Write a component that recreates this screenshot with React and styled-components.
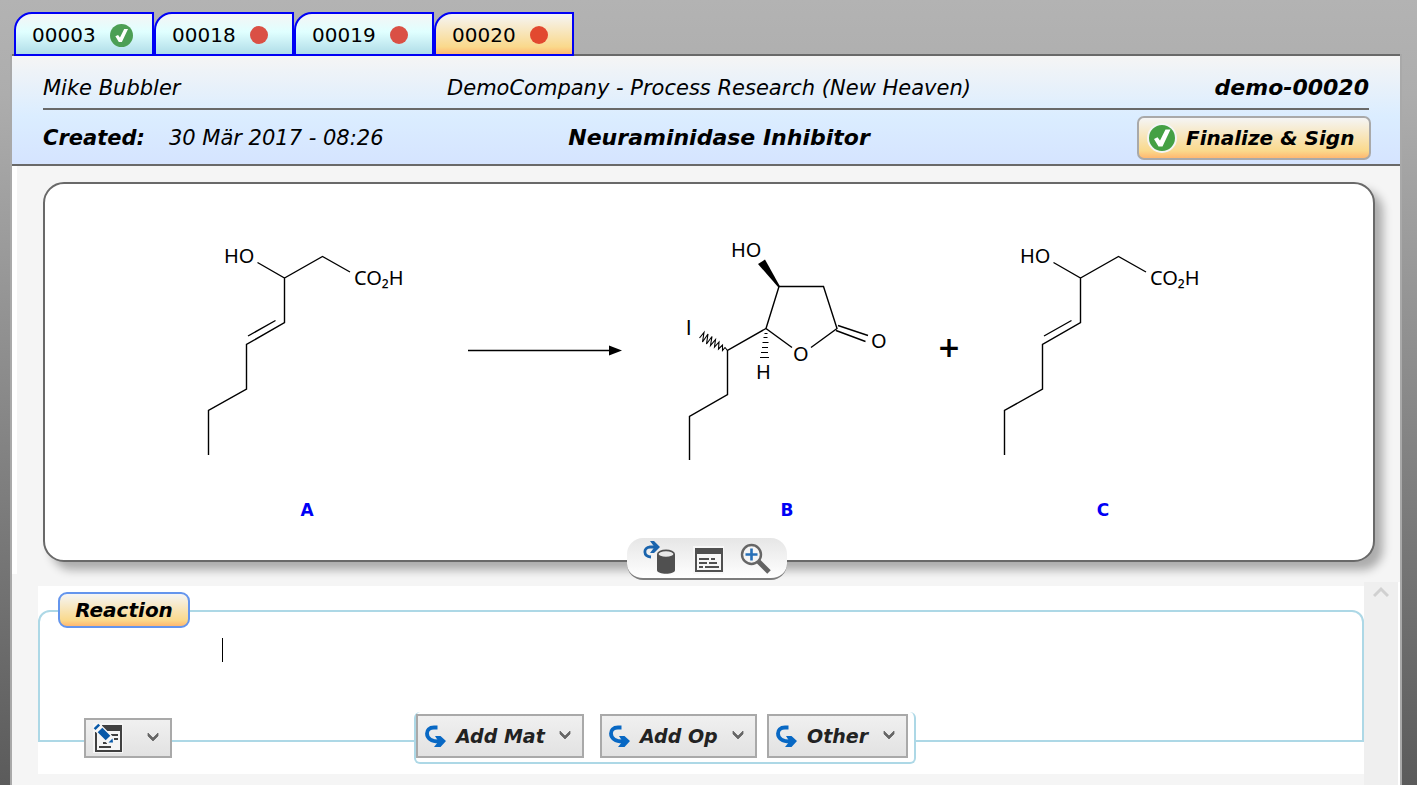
import React from "react";
import styled, { createGlobalStyle } from "styled-components";

const Global = createGlobalStyle`
  * { box-sizing: border-box; }
  html, body { margin: 0; padding: 0; }
  body {
    font-family: "DejaVu Sans", Verdana, sans-serif;
    font-size: 20px;
    line-height: 24px;
    color: #000;
    background: #5b5b5b;
  }
  h1, h2, p { margin: 0; font-size: inherit; }
  button { font: inherit; color: inherit; cursor: pointer; }
`;

const warm = "linear-gradient(#f5f5f5, #fad98c 82%, #ffb870)";

const Page = styled.div`
  min-height: 100vh;
  display: flex;
  flex-direction: column;
  padding: 12px 15px 0 10px;
  background: linear-gradient(#b3b3b3, #adadad 12%, #5b5b5b);
`;

const Tabs = styled.nav`
  display: flex;
  padding-left: 4px;
  margin-bottom: -2px;
  position: relative;
  z-index: 1;
`;

const Tab = styled.button`
  width: 140px;
  height: 44px;
  display: flex;
  align-items: center;
  gap: 14px;
  padding: 2px 0 0 16px;
  border: 2px solid #0000f5;
  border-radius: 18px 0 0 0;
  background: ${(p) => (p.$active ? warm : "linear-gradient(#f5f5f5, #e0ffff 45%, #b0dde8)")};
`;

const Frame = styled.div`
  flex: 1;
  display: flex;
  flex-direction: column;
  border: solid #a9a9a9;
  border-width: 0 2px;
  background: #f5f5f5;
`;

const Header = styled.header`
  height: 112px;
  padding: 0 31px;
  border: solid #696969;
  border-width: 2px 0;
  background: linear-gradient(#f5f5f5, #dbedff 55%, #d5e4ff);
`;

const HeaderRow = styled.div`
  display: flex;
  justify-content: space-between;
  align-items: center;
  height: 54px;
  padding-top: ${(p) => (p.$ruled ? "12px" : "2px")};
  border-bottom: ${(p) => (p.$ruled ? "2px solid #696969" : "0")};
`;

const HeaderText = styled.div`
  flex: ${(p) => (p.$middle ? "none" : "1")};
  display: flex;
  gap: 24px;
  padding-left: ${(p) => (p.$middle ? 6 : 0)}px;
  justify-content: ${(p) => (p.$end ? "flex-end" : "flex-start")};
  font-size: ${(p) => (p.$end ? 22 : 21)}px;
  font-style: italic;
  white-space: nowrap;
`;

const Title = styled.h1`
  && { font-size: 22px; }
  padding-left: 24px;
  font-weight: bold;
  font-style: italic;
  white-space: nowrap;
`;

const ButtonSlot = styled.div`
  flex: 1;
  display: flex;
  justify-content: flex-end;
  margin-right: -2px;
`;

const SignButton = styled.button`
  width: 234px;
  height: 44px;
  display: flex;
  align-items: center;
  gap: 9px;
  padding: 0 8px;
  border: 2px solid #a9a9a9;
  border-radius: 7px;
  background: ${warm};
  font-weight: bold;
  font-style: italic;
  white-space: nowrap;
`;

const Body = styled.main`
  flex: 1;
  display: flex;
  flex-direction: column;
`;

const CardArea = styled.div`
  height: 408px;
  padding: 16px 25px 0 26px;
  border-left: 5px solid #fff;
`;

const Card = styled.section`
  position: relative;
  height: 380px;
  padding: 46px 8px 0 0;
  border: 2px solid #696969;
  border-radius: 21px;
  background: #fff;
  box-shadow: 8px 8px 10px rgba(0, 0, 0, 0.3);
`;

const Scheme = styled.div`
  display: flex;
  justify-content: center;
`;

const Species = styled.figure`
  margin: 0;
  width: 224px;
`;

const Caption = styled.figcaption`
  margin-top: 23px;
  text-align: center;
  font-size: 17px;
  font-weight: bold;
  color: #0000f5;
`;

const Plus = styled.div`
  width: 92px;
  padding: 106px 0 0 8px;
  text-align: center;
  font-size: 28px;
  font-weight: bold;
`;

const Drawing = styled.svg`
  display: block;
  flex: none;
  overflow: visible;
  fill: none;
  stroke: #000;
  stroke-width: 1.4;
  text {
    font-family: "Noto Sans", sans-serif;
    font-size: 20px;
    fill: #000;
    stroke: none;
  }
  text.iodine { font-family: Roboto, sans-serif; }
`;

const CardTools = styled.div`
  position: absolute;
  left: 50%;
  bottom: -20px;
  width: 160px;
  height: 42px;
  margin-left: -82px;
  padding-left: 2px;
  display: flex;
  justify-content: center;
  align-items: center;
  gap: 15px;
  border-bottom: 2px solid #7d7d7d;
  border-radius: 16px;
  background: linear-gradient(#e6e6e6, #fff);
`;

const IconButton = styled.button`
  display: flex;
  padding: 0;
  border: 0;
  background: none;
`;

const Lower = styled.div`
  flex: 1;
  display: flex;
  margin: 8px 0 0 26px;
`;

const Sheet = styled.div`
  flex: 1;
  align-self: flex-start;
  margin-top: 4px;
  padding: 6px 0 32px;
  background: #fff;
`;

const Step = styled.fieldset`
  margin: 0;
  padding: 0;
  min-width: 0;
  border: 2px solid #add8e6;
  border-radius: 12px 12px 0 0;
`;

const StepName = styled.legend`
  margin-left: 18px;
  padding: 0 0 2px;
`;

const StepButton = styled.button`
  display: block;
  width: 132px;
  height: 36px;
  padding: 0;
  border: 2px solid #6495ed;
  border-radius: 9px;
  background: ${warm};
  font-weight: bold;
  font-style: italic;
`;

const Entry = styled.div`
  display: flex;
  height: 82px;
  padding: 8px 16px 0 182px;
`;

const Caret = styled.span`
  width: 1px;
  height: 24px;
  background: #000;
`;

const Note = styled.textarea`
  flex: 1;
  height: 60px;
  padding: 0;
  border: 0;
  outline: 0;
  resize: none;
  background: transparent;
  font: inherit;
`;

const Actions = styled.div`
  display: flex;
  align-items: center;
  height: 52px;
  margin: 0 0 -24px 44px;
`;

const Tray = styled.div`
  display: flex;
  height: 52px;
  width: 502px;
  margin-left: 242px;
  padding: 2px 0 0;
  border: solid #add8e6;
  border-width: 0 2px 2px;
  border-radius: 6px;
  background: #fff;
`;

const MenuButton = styled.button`
  display: flex;
  align-items: center;
  justify-content: space-between;
  width: ${(p) => p.$width}px;
  height: ${(p) => (p.$small ? 40 : 44)}px;
  margin-right: ${(p) => p.$after || 0}px;
  padding: ${(p) => (p.$small ? "0 11px 0 7px" : "0 11px 0 7px")};
  border: 2px solid #a9a9a9;
  background: linear-gradient(#f0f0f0, #e2e2e2);
  color: #222;
  font-size: 19px;
  font-weight: bold;
  font-style: italic;
  white-space: nowrap;
`;

const MenuLabel = styled.span`
  flex: 1;
  padding-left: 9px;
  text-align: left;
`;

const ScrollTrack = styled.div`
  width: 36px;
  display: flex;
  justify-content: center;
  align-items: flex-start;
  padding-top: 4px;
  border-right: 2px solid #fff;
  background: #efefef;
`;

const Check = ({ size, color = "#45a044", ring }) => (
  <svg width={size} height={size} viewBox="0 0 30 30" aria-hidden="true">
    <circle cx="15" cy="15" r={ring ? 14 : 15} fill={color} stroke={ring ? "#f5f5f5" : "none"} strokeWidth="2" />
    <path d="M7 16L10.500 14.300L13 17.500L18.500 6.500H23.500L15.500 23.500H11.500z" fill="#fff" />
  </svg>
);

const Dot = ({ color }) => (
  <svg width="18" height="18" aria-hidden="true"><circle cx="9" cy="9" r="9" fill={color} /></svg>
);

const Chevron = () => (
  <svg width="12" height="12" viewBox="0 0 12 12" aria-hidden="true">
    <path d="M1 1V4L6 9L11 4V1L6 6z" fill="#666" stroke="#666" strokeWidth="0.800" />
  </svg>
);

const Hook = () => (
  <svg width="22" height="24" viewBox="0 0 22 24" aria-hidden="true">
    <path d="M12.500 3.500H9C4 3.500 2 6.500 2 9.500C2 14 6 17.500 14 17.500" fill="none" stroke="#0868c4" strokeWidth="3.800" />
    <path d="M10 12H15.500L21 17L15.500 23H9L13.500 17.500z" fill="#0868c4" />
  </svg>
);

const NoteIcon = () => (
  <svg width="30" height="30" viewBox="0 0 30 30" aria-hidden="true">
    <path d="M0 0H30V30H0z" fill="#f5f5f5" />
    <path d="M3 9V28H28V3" fill="none" stroke="#404040" strokeWidth="2" />
    <path d="M9 2H29V8H9z" fill="#404040" />
    <path d="M18 12h7M21 16h4M10 20h4M6 24h12" stroke="#404040" strokeWidth="2" />
    <path d="M0 0L18 18" stroke="#f5f5f5" strokeWidth="9" />
    <path d="M3 3L4.800 4.800M7 7L15 15" stroke="#0758a8" strokeWidth="6.500" />
    <path d="M15.500 19.500L19.500 15.500L20 19.500z" fill="#0758a8" />
  </svg>
);

const StoreIcon = () => (
  <svg width="34" height="36" viewBox="0 0 34 36" aria-hidden="true">
    <path d="M8 17C0 16.500 0 7.500 7 7H14" fill="none" stroke="#1a64ad" strokeWidth="2.800" />
    <path d="M7 1h4l6 6-6 6H7l4.500-6z" fill="#1a64ad" />
    <path d="M14 14v16c0 5 18 5 18 0V14z" fill="#505050" />
    <ellipse cx="23" cy="14" rx="8.200" ry="3.600" fill="#e8e8e8" stroke="#505050" strokeWidth="1.600" />
  </svg>
);

const FormIcon = () => (
  <svg width="32" height="32" viewBox="0 0 32 32" aria-hidden="true">
    <path d="M1 4h31v28H1z" fill="#f7f7f7" />
    <path d="M4 7h26v22H4z" fill="none" stroke="#505050" strokeWidth="2" />
    <path d="M3 6h28v6H3z" fill="#505050" />
    <path d="M7 17h10M19 17h4M7 21h8M17 21h8M7 25h4M13 25h14" stroke="#505050" strokeWidth="2" />
  </svg>
);

const ZoomIcon = () => (
  <svg width="34" height="36" viewBox="0 0 34 36" aria-hidden="true">
    <path d="M19 21l11 11" stroke="#636363" strokeWidth="5" />
    <circle cx="12.500" cy="14.500" r="9.500" fill="#f5f5f5" stroke="#666" strokeWidth="2.400" />
    <path d="M12.500 8.500v12M6.500 14.500h12" stroke="#2770b8" strokeWidth="2.600" />
  </svg>
);

const HydroxyAcid = () => (
  <Drawing width="224" height="245" viewBox="195 230 224 245" role="img" aria-label="Hydroxy acid">
    <text x="224" y="263">HO</text>
    <path d="M257.500 262.500L284.500 278L322.500 256.500L350 272M284.500 278V322.500L246.500 344.500V389L208.500 410.500V455M248 336L275.500 320.500" />
    <text x="354" y="285">CO₂H</text>
  </Drawing>
);

const IodoLactone = () => (
  <Drawing width="224" height="245" viewBox="675 230 224 245" role="img" aria-label="Iodolactone">
    <text x="731" y="257">HO</text>
    <path d="M758 264L765 259.500L780 286.500L778.500 287.500z" fill="#000" stroke="none" />
    <path d="M792 347.500L766 328.500L779 286.500H823.500L837 328.500L811 347.500M838 325.500L868 335.500M836 330.500L865.500 341.500" />
    <path d="M766 328.500L727.500 350.500V394.500L689.500 416.500V460" />
    <path d="M764.500 333.500h3M763.500 337.500h4M762.500 342.500h6M762 347.500h6M761 352.500h7M760 357.500h9" strokeWidth="1.200" />
    <path d="M699.500 338L704 332.500L702.500 342L708 334L706.500 344L712 336.500L710.500 345.500L715.500 339.500L714.500 347L719 342L718.500 349L722.500 345L722.500 350.500L725 347.500L727.500 350.500" strokeWidth="1.100" />
    <text className="iodine" x="686" y="335">I</text>
    <text x="793" y="361">O</text>
    <text x="871" y="348">O</text>
    <text x="756" y="379">H</text>
  </Drawing>
);

const ReactionArrow = () => (
  <Drawing width="256" height="245" viewBox="419 230 256 245" role="img" aria-label="yields">
    <path d="M468 350.500H610" />
    <path d="M609 345.500L622 350.500L609 355.500z" fill="#000" stroke="none" />
  </Drawing>
);

const tabs = [
  { id: "00003", done: true },
  { id: "00018" },
  { id: "00019" },
  { id: "00020", active: true },
];

const menus = [
  { label: "Add Mat", width: 168, after: 16 },
  { label: "Add Op", width: 157, after: 10 },
  { label: "Other", width: 141 },
];

export default function App() {
  return (
    <Page>
      <Global />
      <Tabs>
        {tabs.map((t) => (
          <Tab key={t.id} $active={t.active}>
            {t.id}
            {t.done ? <Check size={23} color="#4c9f55" /> : <Dot color={t.active ? "#e2492f" : "#da5045"} />}
          </Tab>
        ))}
      </Tabs>
      <Frame>
        <Header>
          <HeaderRow $ruled>
            <HeaderText>Mike Bubbler</HeaderText>
            <HeaderText $middle>DemoCompany - Process Research (New Heaven)</HeaderText>
            <HeaderText $end><strong>demo-00020</strong></HeaderText>
          </HeaderRow>
          <HeaderRow>
            <HeaderText><strong>Created:</strong><span>30 Mär 2017 - 08:26</span></HeaderText>
            <Title>Neuraminidase Inhibitor</Title>
            <ButtonSlot>
              <SignButton><Check size={30} ring />Finalize &amp; Sign</SignButton>
            </ButtonSlot>
          </HeaderRow>
        </Header>
        <Body>
          <CardArea>
            <Card>
              <Scheme>
                <Species><HydroxyAcid /><Caption>A</Caption></Species>
                <ReactionArrow />
                <Species><IodoLactone /><Caption>B</Caption></Species>
                <Plus>+</Plus>
                <Species><HydroxyAcid /><Caption>C</Caption></Species>
              </Scheme>
              <CardTools>
                <IconButton aria-label="Store reaction"><StoreIcon /></IconButton>
                <IconButton aria-label="Show details"><FormIcon /></IconButton>
                <IconButton aria-label="Zoom in"><ZoomIcon /></IconButton>
              </CardTools>
            </Card>
          </CardArea>
          <Lower>
            <Sheet>
              <Step>
                <StepName><StepButton>Reaction</StepButton></StepName>
                <Entry><Caret /><Note aria-label="Reaction notes" /></Entry>
                <Actions>
                  <MenuButton $small $width={88} aria-label="Edit note"><NoteIcon /><Chevron /></MenuButton>
                  <Tray>
                    {menus.map((m) => (
                      <MenuButton key={m.label} $width={m.width} $after={m.after}>
                        <Hook /><MenuLabel>{m.label}</MenuLabel><Chevron />
                      </MenuButton>
                    ))}
                  </Tray>
                </Actions>
              </Step>
            </Sheet>
            <ScrollTrack>
              <IconButton aria-label="Scroll up">
                <svg width="16" height="12" viewBox="0 0 16 12" aria-hidden="true">
                  <path d="M1 10L8 3L15 10" fill="none" stroke="#d0d0d0" strokeWidth="3" />
                </svg>
              </IconButton>
            </ScrollTrack>
          </Lower>
        </Body>
      </Frame>
    </Page>
  );
}
